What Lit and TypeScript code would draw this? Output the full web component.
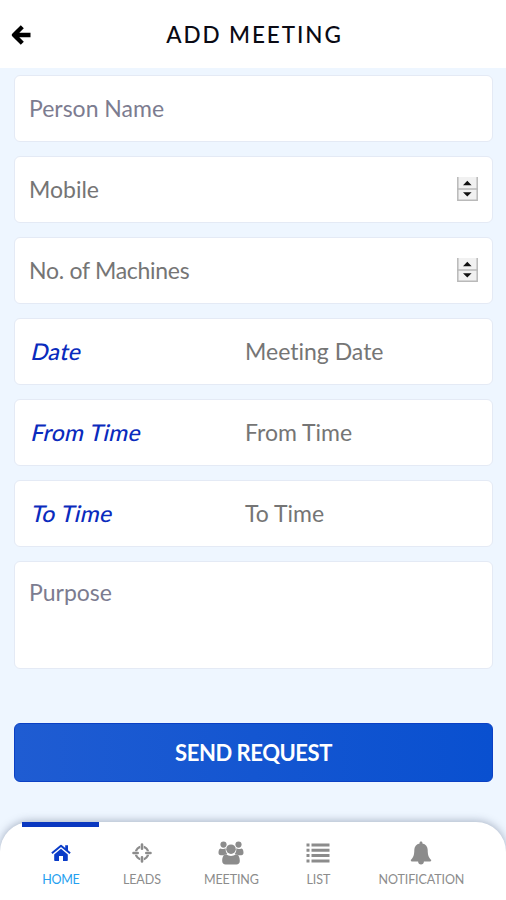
import { LitElement, html, svg, css } from "lit";
import { customElement } from "lit/decorators.js";

const icons = {
  home: svg`<svg width="20" height="18" viewBox="0 0 20 18"><path fill="currentColor" d="M10 4.800 16.800 10.500v5.700a.8.8 0 0 1-.8.8h-4v-5H8v5H4a.8.8 0 0 1-.8-.8v-5.700z"/><path fill="none" stroke="currentColor" stroke-width="2" stroke-linejoin="round" d="M.9 9.200 10 1.700l9.100 7.500"/><path fill="currentColor" d="M14.200 1.200h2.800v6l-2.800-2.400z"/></svg>`,
  leads: svg`<svg width="20" height="20" viewBox="0 0 20 20"><circle cx="10" cy="10" r="6.300" fill="none" stroke="currentColor" stroke-width="2.200"/><path stroke="#fff" stroke-width="3.600" d="M10 0v8M10 12v8M0 10h8M12 10h8"/><path stroke="currentColor" stroke-width="2.600" stroke-linecap="round" d="M10 1.500v4.200M10 14.300v4.200M1.500 10h4.200M14.300 10h4.200"/></svg>`,
  meeting: svg`<svg width="26" height="24" viewBox="0 0 26 24"><g fill="currentColor"><circle cx="5.500" cy="3.600" r="3.100"/><circle cx="20.500" cy="3.600" r="3.100"/><path d="M2.600 7.400c1.600.9 3.800.9 5.100-.1-.2 2.300.3 4.200 1.600 5.600-1.400.1-2.400.6-3.300 1.400H2.800C1.200 14.300.5 13.200.5 11.800.5 9.900 1 7.600 2.600 7.400zM23.400 7.400c-1.600.9-3.800.9-5.100-.1.2 2.300-.3 4.200-1.600 5.600 1.400.1 2.400.6 3.300 1.400h3.200c1.600 0 2.300-1.100 2.300-2.500 0-1.900-.5-4.200-2.100-4.400z"/><circle cx="13" cy="8.200" r="4.800"/><path d="M8.200 13.300c2.800 2.200 6.800 2.200 9.600 0 3 .3 4 3.300 4 6.700 0 2.300-1.300 3.500-3.400 3.500H7.600c-2.100 0-3.400-1.200-3.400-3.500 0-3.400 1-6.400 4-6.700z"/></g></svg>`,
  list: svg`<svg width="24" height="20" viewBox="0 0 24 20"><path stroke="currentColor" stroke-width="3" d="M.5 2h3M.5 7.300h3M.5 12.600h3M.5 17.900h3M5.500 2h18M5.500 7.300h18M5.500 12.600h18M5.500 17.900h18"/></svg>`,
  bell: svg`<svg width="22" height="24" viewBox="0 0 22 24"><path fill="currentColor" d="M11 .5c.9 0 1.400.6 1.400 1.400v.6c3.300.7 5.300 3.200 5.300 6.500 0 5.300 1.200 8 3.600 10 0 .8-.6 1.500-1.500 1.500H13.900c0 1.700-1.300 3-2.900 3s-2.900-1.300-2.900-3H2.200c-.9 0-1.500-.7-1.500-1.500 2.400-2 3.600-4.700 3.600-10 0-3.300 2-5.800 5.300-6.500v-.6c0-.8.5-1.400 1.400-1.400z"/></svg>`,
};

const tabs = [
  { label: "HOME", icon: icons.home, cls: "home" },
  { label: "LEADS", icon: icons.leads, cls: "leads" },
  { label: "MEETING", icon: icons.meeting, cls: "meeting" },
  { label: "LIST", icon: icons.list, cls: "list" },
  { label: "NOTIFICATION", icon: icons.bell, cls: "notification" },
];

@customElement("app-root")
export class AppRoot extends LitElement {
  static styles = css`
    * { box-sizing: border-box; }
    :host {
      display: flex; flex-direction: column; height: 900px; overflow: hidden;
      background: #eef6ff; font-family: Lato, sans-serif; color: #757575;
      font-variant-ligatures: none;
    }
    svg { display: block; }
    header {
      height: 68px; flex: none; background: #fff; display: grid;
      grid-template-columns: 40px 1fr 40px; align-items: center; padding-top: 2px;
    }
    .back { color: #000; padding-left: 11px; }
    h1 {
      margin: 0; text-align: center; font-size: 22.500px; font-weight: 500; color: #0a0a14;
      letter-spacing: 1.900px; line-height: 30px; white-space: nowrap; padding-left: 3px;
    }
    form { display: flex; flex-direction: column; gap: 14px; padding: 7px 13px 0 14px; }
    .field {
      height: 67px; background: #fff; border: 1px solid #e4eaf5; border-radius: 6px;
      display: flex; align-items: center; padding: 0 14px 2px; font-size: 23px; line-height: 30px;
    }
    .field.cool { color: #7c7c90; }
    .tight { letter-spacing: -.28px; }
    .label { width: 216px; padding-left: 3px; font-weight: 500; color: #0a2bbd; }
    .slant { display: inline-block; transform: skewX(-13deg); letter-spacing: .25px; }
    .spinner { margin-left: auto; }
    .purpose { height: 108px; align-items: flex-start; padding-top: 15px; }
    .send {
      height: 59px; margin-top: 40px; border: 1px solid #0b40c4; border-radius: 6px;
      background: linear-gradient(90deg, #1f5cd2, #0950d0); color: #fff;
      font: 700 22px/30px Lato, sans-serif; letter-spacing: -.45px; padding: 0;
    }
    nav {
      margin-top: auto; height: 78px; flex: none; background: #fff; border-radius: 30px 30px 0 0;
      box-shadow: 0 -1px 9px rgba(60, 75, 105, .4);
      display: grid; grid-template-columns: 77px 85px 94px 80px 126px; padding-left: 22.400px;
      color: #8c8c8c;
    }
    .tab {
      display: flex; flex-direction: column; align-items: center; border-top: 5px solid transparent;
      font-size: 12.500px; letter-spacing: -.1px; line-height: 16px; white-space: nowrap;
    }
    .glyph { height: 26px; margin-top: 13px; display: flex; align-items: center; }
    .text { margin-top: 6px; }
    .home { border-top-color: #0a38c0; color: #25a0f0; }
    .home .text { letter-spacing: -.3px; }
    .home .glyph { color: #0a3cc8; }
  `;

  private spinner() {
    return svg`<svg class="spinner" width="21" height="24" viewBox="0 0 21 24"><path fill="#f1f1f1" d="M0 0h21v24H0z"/><path fill="none" stroke="#b9b9b9" stroke-width="1.500" d="M.8 0v23.200h19.400V0M0 12h21"/><path fill="#111" d="m6 8.200 4.300-4.400 4.300 4.400zM6 15.200l4.300 4.400 4.300-4.400z"/></svg>`;
  }

  render() {
    return html`
      <header>
        <div class="back"><svg width="20" height="20" viewBox="0 0 20 20"><path fill="none" stroke="currentColor" stroke-width="4.300" stroke-linejoin="round" d="M19.500 10H4M11.300 1.700 3 10l8.300 8.300"/></svg></div>
        <h1>ADD MEETING</h1>
      </header>
      <form>
        <div class="field cool">Person Name</div>
        <div class="field">Mobile ${this.spinner()}</div>
        <div class="field"><span class="tight">No. of Machines</span>${this.spinner()}</div>
        <div class="field"><span class="label"><span class="slant">Date</span></span>Meeting Date</div>
        <div class="field"><span class="label"><span class="slant">From Time</span></span>From Time</div>
        <div class="field"><span class="label"><span class="slant">To Time</span></span>To Time</div>
        <div class="field cool purpose">Purpose</div>
        <button class="send" type="button">SEND REQUEST</button>
      </form>
      <nav>
        ${tabs.map((t) => html`<div class="tab ${t.cls}"><div class="glyph">${t.icon}</div><span class="text">${t.label}</span></div>`)}
      </nav>`;
  }
}
